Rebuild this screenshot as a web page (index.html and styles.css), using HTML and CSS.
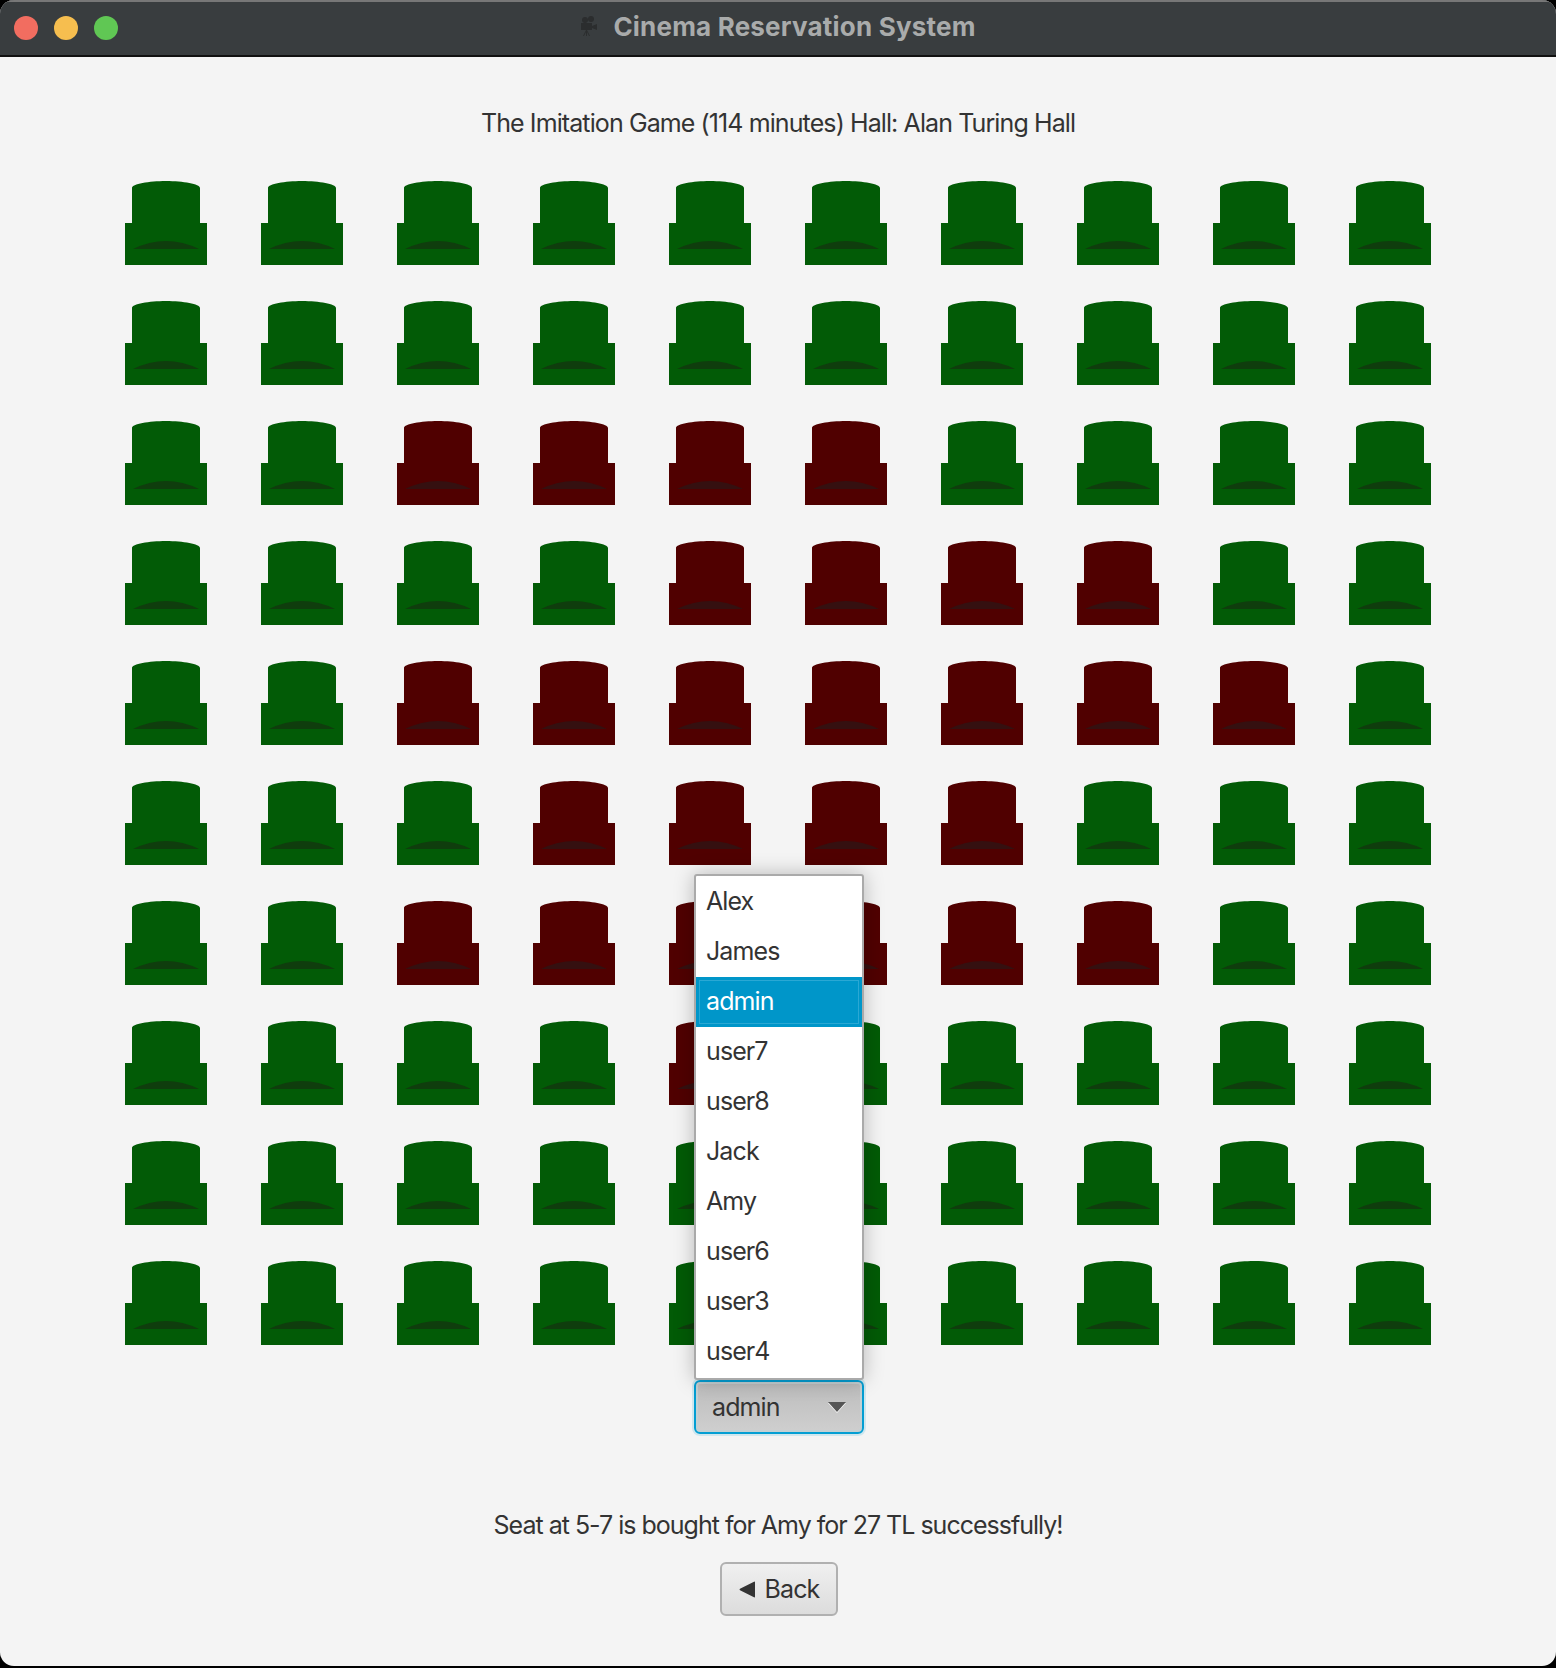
FILE: index.html
```html
<!DOCTYPE html>
<html>
<head>
  <title>Cinema Reservation System</title>
  <link rel="stylesheet" href="styles.css">
</head>
<body>
  <svg class="defs" width="0" height="0">
    <symbol id="seat" viewBox="0 0 82 84">
      <path class="seat-body" d="M7 42V7C7 3 24 0 41 0S75 3 75 7V42H82V84H0V42Z"/>
      <path class="seat-fold" d="M8 68Q41 52 74 68Z"/>
    </symbol>
  </svg>
  <div id="app">
    <div class="titlebar">
      <div class="lights">
        <span class="light red"></span>
        <span class="light yellow"></span>
        <span class="light green"></span>
      </div>
      <svg class="camera" width="17" height="20" viewBox="0 0 17 20">
        <circle cx="5" cy="4" r="3"/>
        <circle cx="11" cy="3" r="3"/>
        <path d="M1 7H12V10L17 8V14L12 12V14H1Z"/>
        <path class="camera-legs" d="M6.500 14L3.500 20M6.500 14L9.500 20M6.500 14V20"/>
      </svg>
      <span class="window-title">Cinema Reservation System</span>
    </div>
    <div class="content">
      <h1 class="movie">The Imitation Game (114 minutes) Hall: Alan Turing Hall</h1>
      <div class="seats">
        <svg class="seat free"><use href="#seat"/></svg><svg class="seat free"><use href="#seat"/></svg><svg class="seat free"><use href="#seat"/></svg><svg class="seat free"><use href="#seat"/></svg><svg class="seat free"><use href="#seat"/></svg><svg class="seat free"><use href="#seat"/></svg><svg class="seat free"><use href="#seat"/></svg><svg class="seat free"><use href="#seat"/></svg><svg class="seat free"><use href="#seat"/></svg><svg class="seat free"><use href="#seat"/></svg>
        <svg class="seat free"><use href="#seat"/></svg><svg class="seat free"><use href="#seat"/></svg><svg class="seat free"><use href="#seat"/></svg><svg class="seat free"><use href="#seat"/></svg><svg class="seat free"><use href="#seat"/></svg><svg class="seat free"><use href="#seat"/></svg><svg class="seat free"><use href="#seat"/></svg><svg class="seat free"><use href="#seat"/></svg><svg class="seat free"><use href="#seat"/></svg><svg class="seat free"><use href="#seat"/></svg>
        <svg class="seat free"><use href="#seat"/></svg><svg class="seat free"><use href="#seat"/></svg><svg class="seat taken"><use href="#seat"/></svg><svg class="seat taken"><use href="#seat"/></svg><svg class="seat taken"><use href="#seat"/></svg><svg class="seat taken"><use href="#seat"/></svg><svg class="seat free"><use href="#seat"/></svg><svg class="seat free"><use href="#seat"/></svg><svg class="seat free"><use href="#seat"/></svg><svg class="seat free"><use href="#seat"/></svg>
        <svg class="seat free"><use href="#seat"/></svg><svg class="seat free"><use href="#seat"/></svg><svg class="seat free"><use href="#seat"/></svg><svg class="seat free"><use href="#seat"/></svg><svg class="seat taken"><use href="#seat"/></svg><svg class="seat taken"><use href="#seat"/></svg><svg class="seat taken"><use href="#seat"/></svg><svg class="seat taken"><use href="#seat"/></svg><svg class="seat free"><use href="#seat"/></svg><svg class="seat free"><use href="#seat"/></svg>
        <svg class="seat free"><use href="#seat"/></svg><svg class="seat free"><use href="#seat"/></svg><svg class="seat taken"><use href="#seat"/></svg><svg class="seat taken"><use href="#seat"/></svg><svg class="seat taken"><use href="#seat"/></svg><svg class="seat taken"><use href="#seat"/></svg><svg class="seat taken"><use href="#seat"/></svg><svg class="seat taken"><use href="#seat"/></svg><svg class="seat taken"><use href="#seat"/></svg><svg class="seat free"><use href="#seat"/></svg>
        <svg class="seat free"><use href="#seat"/></svg><svg class="seat free"><use href="#seat"/></svg><svg class="seat free"><use href="#seat"/></svg><svg class="seat taken"><use href="#seat"/></svg><svg class="seat taken"><use href="#seat"/></svg><svg class="seat taken"><use href="#seat"/></svg><svg class="seat taken"><use href="#seat"/></svg><svg class="seat free"><use href="#seat"/></svg><svg class="seat free"><use href="#seat"/></svg><svg class="seat free"><use href="#seat"/></svg>
        <svg class="seat free"><use href="#seat"/></svg><svg class="seat free"><use href="#seat"/></svg><svg class="seat taken"><use href="#seat"/></svg><svg class="seat taken"><use href="#seat"/></svg><svg class="seat taken"><use href="#seat"/></svg><svg class="seat taken"><use href="#seat"/></svg><svg class="seat taken"><use href="#seat"/></svg><svg class="seat taken"><use href="#seat"/></svg><svg class="seat free"><use href="#seat"/></svg><svg class="seat free"><use href="#seat"/></svg>
        <svg class="seat free"><use href="#seat"/></svg><svg class="seat free"><use href="#seat"/></svg><svg class="seat free"><use href="#seat"/></svg><svg class="seat free"><use href="#seat"/></svg><svg class="seat taken"><use href="#seat"/></svg><svg class="seat free"><use href="#seat"/></svg><svg class="seat free"><use href="#seat"/></svg><svg class="seat free"><use href="#seat"/></svg><svg class="seat free"><use href="#seat"/></svg><svg class="seat free"><use href="#seat"/></svg>
        <svg class="seat free"><use href="#seat"/></svg><svg class="seat free"><use href="#seat"/></svg><svg class="seat free"><use href="#seat"/></svg><svg class="seat free"><use href="#seat"/></svg><svg class="seat free"><use href="#seat"/></svg><svg class="seat free"><use href="#seat"/></svg><svg class="seat free"><use href="#seat"/></svg><svg class="seat free"><use href="#seat"/></svg><svg class="seat free"><use href="#seat"/></svg><svg class="seat free"><use href="#seat"/></svg>
        <svg class="seat free"><use href="#seat"/></svg><svg class="seat free"><use href="#seat"/></svg><svg class="seat free"><use href="#seat"/></svg><svg class="seat free"><use href="#seat"/></svg><svg class="seat free"><use href="#seat"/></svg><svg class="seat free"><use href="#seat"/></svg><svg class="seat free"><use href="#seat"/></svg><svg class="seat free"><use href="#seat"/></svg><svg class="seat free"><use href="#seat"/></svg><svg class="seat free"><use href="#seat"/></svg>
      </div>
      <div class="combo-wrap">
        <ul class="popup">
          <li>Alex</li>
          <li>James</li>
          <li class="selected">admin</li>
          <li>user7</li>
          <li>user8</li>
          <li>Jack</li>
          <li>Amy</li>
          <li>user6</li>
          <li>user3</li>
          <li>user4</li>
        </ul>
        <div class="combo">
          <span>admin</span>
          <span class="arrow"></span>
        </div>
      </div>
      <p class="message">Seat at 5-7 is bought for Amy for 27 TL successfully!</p>
      <button class="back">
        <svg width="17" height="17" viewBox="0 0 17 17"><path d="M16 1.500V15.500Q16 16.800 15 16.300L1 9.200Q0 8.500 1 7.800L15 0.700Q16 0.200 16 1.500Z"/></svg>
        Back
      </button>
    </div>
  </div>
</body>
</html>
```

FILE: styles.css
```css
body {
  margin: 0;
  background-color: #000;
  font-family: Inter, "Liberation Sans", sans-serif;
  font-size: 25px;
  letter-spacing: -0.9px;
  color: #333;
}
.defs {
  display: block;
}
#app {
  height: 1666px;
  background-color: #f4f4f4;
  border-radius: 14px;
  overflow: hidden;
}
.titlebar {
  height: 53px;
  box-sizing: content-box;
  background-color: #393d3f;
  border-top: 2px solid #777;
  border-bottom: 2px solid #111;
  display: flex;
  align-items: center;
  justify-content: center;
  gap: 16px;
  position: relative;
}
.lights {
  position: absolute;
  left: 14px;
  top: 14px;
  display: flex;
  gap: 16px;
}
.light {
  width: 24px;
  height: 24px;
  border-radius: 50%;
}
.red { background-color: #f26d60; }
.yellow { background-color: #f6be4f; }
.green { background-color: #60c754; }
.camera {
  fill: #2b2d2e;
  stroke: none;
  margin-bottom: 5px;
}
.camera-legs {
  fill: none;
  stroke: #2b2d2e;
  stroke-width: 1;
}
.window-title {
  font-size: 26px;
  font-weight: 700;
  letter-spacing: 0.2px;
  line-height: 32px;
  margin-bottom: 3px;
  color: #a9abab;
}
.content {
  display: flex;
  flex-direction: column;
  align-items: center;
}
.movie {
  margin: 50px 0 42px;
  font-size: 25px;
  font-weight: 400;
  line-height: 32px;
}
.seats {
  display: grid;
  grid-template-columns: repeat(10, 82px);
  grid-auto-rows: 84px;
  gap: 36px 54px;
}
.seat {
  width: 82px;
  height: 84px;
}
.free { fill: #025b06; --fold: #0f3d0d; }
.taken { fill: #500000; --fold: #351010; }
.seat-fold {
  fill: var(--fold);
}
.combo-wrap {
  position: relative;
  margin: 35px 0 0 2px;
}
.combo {
  box-sizing: border-box;
  width: 170px;
  height: 54px;
  padding: 0 16px;
  display: flex;
  align-items: center;
  justify-content: space-between;
  border: 2px solid #039ed3;
  border-radius: 6px;
  background: linear-gradient(#bcbcbc, #cfcfcf);
  box-shadow: 0 0 0 2px rgba(3, 158, 211, 0.15), inset 0 0 0 2px #c4d0d3;
}
.arrow {
  width: 0;
  height: 0;
  border-left: 9px solid transparent;
  border-right: 9px solid transparent;
  border-top: 10px solid #555;
  filter: drop-shadow(0 1px 0 #fff);
}
.popup {
  position: absolute;
  left: 0;
  bottom: 100%;
  box-sizing: border-box;
  width: 170px;
  margin: 0;
  padding: 1px 0;
  list-style: none;
  background-color: #fff;
  border: 2px solid #aaa;
  border-radius: 3px;
  box-shadow: 0 0 20px rgba(0, 0, 0, 0.25);
}
.popup li {
  height: 50px;
  padding: 0 10px;
  line-height: 48px;
}
.popup li.selected {
  color: #fff;
  background-color: #0096c9;
  box-shadow: inset 0 0 0 3px #0096c9, inset 0 0 0 4px #2aa8d4;
}
.message {
  margin: 75px 0 0;
  line-height: 32px;
  letter-spacing: -1px;
}
.back {
  box-sizing: border-box;
  width: 118px;
  height: 54px;
  margin: 21px 0 0 2px;
  padding: 0;
  display: flex;
  align-items: center;
  justify-content: center;
  gap: 9px;
  border: 2px solid #b0b0b0;
  border-radius: 6px;
  background: linear-gradient(#f0f0f0, #dcdcdc);
  font-family: inherit;
  font-size: 25px;
  letter-spacing: -0.9px;
  color: #333;
}
.back svg {
  fill: #333;
}
```
